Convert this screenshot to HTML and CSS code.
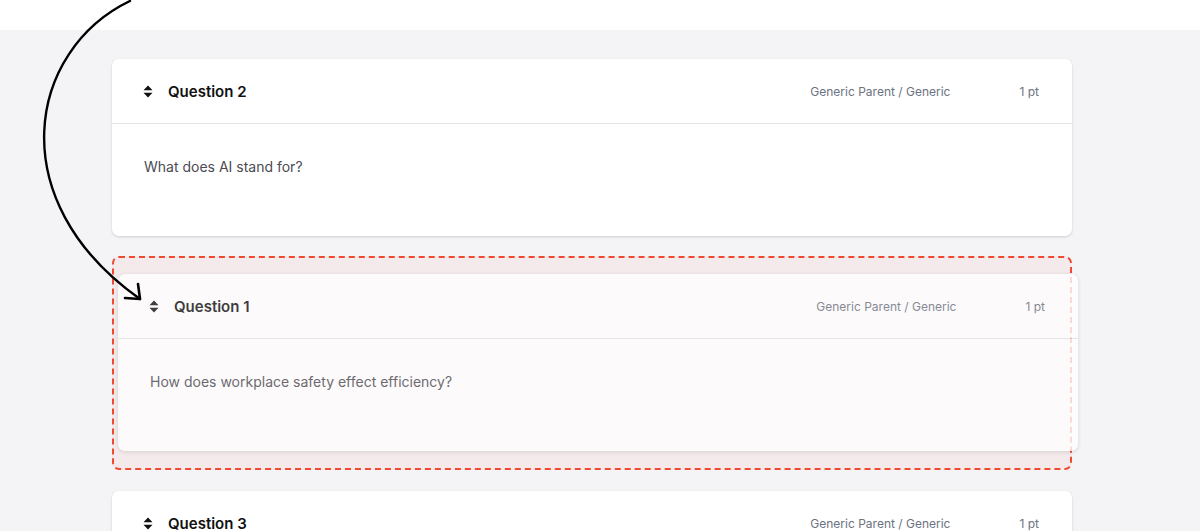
FILE: index.html
```html
<!DOCTYPE html>
<html>
<head>
  <title>Quiz Questions</title>
  <link rel="stylesheet" href="styles.css">
</head>
<body>
  <div class="topbar"></div>

  <div class="page">
    <div class="question-list">

      <div class="card">
        <div class="card-header">
          <svg class="drag-icon" viewBox="0 0 10 13" width="10" height="13"><path d="M5 0.5 L9.5 5.2 H0.5 Z M5 12.5 L9.5 7.8 H0.5 Z" fill="currentColor"/></svg>
          <span class="card-title">Question 2</span>
          <span class="card-meta">Generic Parent / Generic</span>
          <span class="card-points">1 pt</span>
        </div>
        <div class="card-body">What does AI stand for?</div>
      </div>

      <div class="drop-zone">
        <div class="card dragging">
          <div class="card-header">
            <svg class="drag-icon" viewBox="0 0 10 13" width="10" height="13"><path d="M5 0.5 L9.5 5.2 H0.5 Z M5 12.5 L9.5 7.8 H0.5 Z" fill="currentColor"/></svg>
            <span class="card-title">Question 1</span>
            <span class="card-meta">Generic Parent / Generic</span>
            <span class="card-points">1 pt</span>
          </div>
          <div class="card-body">How does workplace safety effect efficiency?</div>
        </div>
      </div>

      <div class="card">
        <div class="card-header">
          <svg class="drag-icon" viewBox="0 0 10 13" width="10" height="13"><path d="M5 0.5 L9.5 5.2 H0.5 Z M5 12.5 L9.5 7.8 H0.5 Z" fill="currentColor"/></svg>
          <span class="card-title">Question 3</span>
          <span class="card-meta">Generic Parent / Generic</span>
          <span class="card-points">1 pt</span>
        </div>
        <div class="card-body">Which of these is a renewable energy source?</div>
      </div>

    </div>
  </div>

  <!-- hand drawn arrow showing the move -->
  <svg class="move-arrow" width="200" height="320" viewBox="0 0 200 320">
    <path d="M130 1 C 28 50, 0 200, 140 299" fill="none" stroke="#000" stroke-width="2.4" stroke-linecap="round"/>
    <path d="M138 284 L140 299 L125 298" fill="none" stroke="#000" stroke-width="2.6" stroke-linecap="round" stroke-linejoin="round"/>
  </svg>
</body>
</html>
```

FILE: styles.css
```css
body {
  margin: 0;
  background-color: #f4f4f6;
  font-family: Inter, 'Noto Sans', sans-serif;
  color: #111;
  position: relative;
  overflow: hidden;
}

.topbar {
  height: 30px;
  background-color: #fff;
}

.page {
  padding-top: 29px;
}

.question-list {
  width: 960px;
  margin-left: 112px;
  display: flex;
  flex-direction: column;
  gap: 20px;
}

.card {
  background-color: #fff;
  border-radius: 7px;
  box-shadow: 0 1px 3px rgba(0, 0, 0, 0.12), 0 1px 2px rgba(0, 0, 0, 0.04);
}

.card-header {
  display: flex;
  align-items: center;
  height: 64px;
  padding: 0 33px 0 31px;
  border-bottom: 1px solid #e4e4e7;
}

.drag-icon {
  color: #111;
  margin-right: 15px;
}

.card-title {
  font-size: 15px;
  font-weight: 600;
  flex: 1;
}

.card-meta {
  font-size: 12px;
  color: #6b7280;
}

.card-points {
  font-size: 12px;
  color: #6b7280;
  margin-left: 69px;
}

.card-body {
  height: 112px;
  box-sizing: border-box;
  padding: 33px 32px 0;
  font-size: 14px;
  line-height: 20px;
  color: #4b4b52;
}

.drop-zone {
  height: 214px;
  box-sizing: border-box;
  padding-top: 16px;
  margin-bottom: 1px;
  border: 2px dashed #ee4a30;
  border-radius: 7px;
  background-color: #f4eaeb;
}

.drop-zone .card {
  margin-left: 4px;
  margin-right: -8px;
}

.dragging {
  opacity: 0.8;
  box-shadow: 0 1px 4px rgba(0, 0, 0, 0.14);
}

.move-arrow {
  position: absolute;
  left: 0;
  top: 0;
  pointer-events: none;
}
```
